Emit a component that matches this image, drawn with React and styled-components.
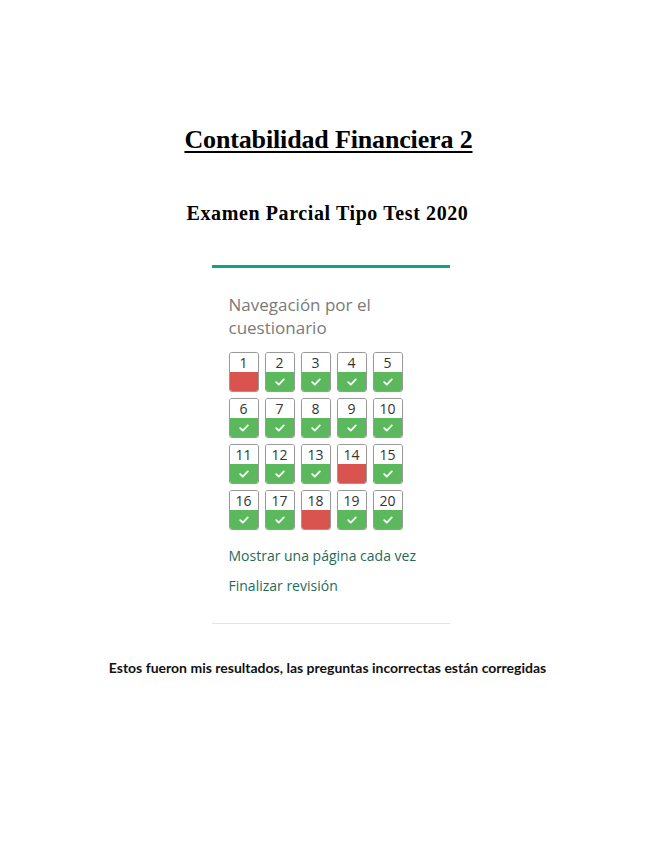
import React from "react";
import styled, { createGlobalStyle } from "styled-components";

const Global = createGlobalStyle`
  html, body { margin: 0; padding: 0; background: #ffffff; }
  body { width: 655px; height: 848px; overflow: hidden; }
`;

const Page = styled.div`
  width: 655px;
  height: 848px;
  display: flex;
  flex-direction: column;
  align-items: center;
  background: #fff;
`;

const Title = styled.h1`
  margin: 127px 0 0 0;
  font-family: "Liberation Serif", "Times New Roman", serif;
  font-weight: 700;
  font-size: 26px;
  line-height: 26px;
  letter-spacing: -0.15px;
  text-decoration: underline;
  text-decoration-thickness: 2px;
  text-underline-offset: 3px;
  color: #000;
  padding-left: 2px;
`;

const Subtitle = styled.h2`
  margin: 50px 0 0 0;
  font-family: "Liberation Serif", "Times New Roman", serif;
  font-weight: 700;
  font-size: 20px;
  line-height: 20px;
  letter-spacing: 0.6px;
  color: #000;
`;

const Panel = styled.section`
  margin-top: 42px;
  width: 238px;
  box-sizing: border-box;
  border-top: 3px solid #13a088;
  border-bottom: 1px solid #dfe5e8;
  padding: 25px 0 28px 17px;
  margin-left: 6px;
`;

const PanelHeading = styled.h3`
  margin: 0;
  font-family: "Open Sans", "Noto Sans", sans-serif;
  font-weight: 400;
  font-size: 17px;
  line-height: 23px;
  color: #7a7a7a;
  width: 190px;
`;

const Grid = styled.div`
  margin-top: 13px;
  display: grid;
  grid-template-columns: repeat(5, 30px);
  column-gap: 6px;
  row-gap: 6px;
`;

const QBox = styled.div`
  width: 30px;
  height: 40px;
  box-sizing: border-box;
  border: 1px solid #9a9a9a;
  border-radius: 3px;
  overflow: hidden;
  display: flex;
  flex-direction: column;
  box-shadow: 0 0 1px rgba(0,0,0,0.15);
`;

const QNum = styled.div`
  height: 19px;
  background: #fff;
  font-family: "Open Sans", "Noto Sans", sans-serif;
  font-size: 14px;
  line-height: 20px;
  text-align: center;
  color: #333;
`;

const QState = styled.div`
  flex: 1;
  background: ${(p) => (p.$ok ? "#5cb85c" : "#d9534f")};
  display: flex;
  align-items: center;
  justify-content: center;
`;

const Links = styled.div`
  margin-top: 16px;
  display: flex;
  flex-direction: column;
  gap: 11px;
`;

const NavLink = styled.a`
  font-family: "Open Sans", "Noto Sans", sans-serif;
  font-size: 14px;
  line-height: 19px;
  color: #1f6b5b;
  text-decoration: none;
`;

const Note = styled.p`
  margin: 36px 0 0 0;
  font-family: Lato, "Liberation Sans", sans-serif;
  font-weight: 700;
  font-size: 14px;
  line-height: 16px;
  color: #111;
`;

const Check = () => (
  <svg width="10" height="8" viewBox="0 0 10 8">
    <polyline points="1.2,4.2 3.8,6.6 8.8,1.4" fill="none" stroke="#fff" strokeWidth="1.8" strokeLinecap="round" strokeLinejoin="round" />
  </svg>
);

const wrong = new Set([1, 14, 18]);

export default function App() {
  const qs = Array.from({ length: 20 }, (_, i) => i + 1);
  return (
    <>
      <Global />
      <Page>
        <Title>Contabilidad Financiera 2</Title>
        <Subtitle>Examen Parcial Tipo Test 2020</Subtitle>
        <Panel>
          <PanelHeading>Navegación por el cuestionario</PanelHeading>
          <Grid>
            {qs.map((n) => {
              const ok = !wrong.has(n);
              return (
                <QBox key={n}>
                  <QNum>{n}</QNum>
                  <QState $ok={ok}>{ok && <Check />}</QState>
                </QBox>
              );
            })}
          </Grid>
          <Links>
            <NavLink href="#">Mostrar una página cada vez</NavLink>
            <NavLink href="#">Finalizar revisión</NavLink>
          </Links>
        </Panel>
        <Note>Estos fueron mis resultados, las preguntas incorrectas están corregidas</Note>
      </Page>
    </>
  );
}
